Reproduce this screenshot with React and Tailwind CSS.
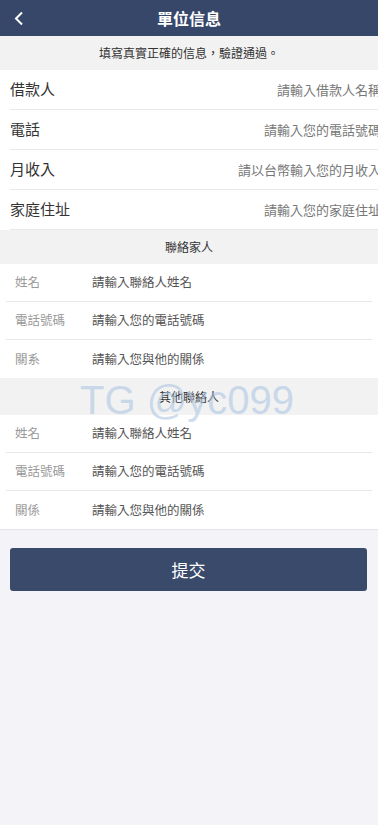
import React from "react";

const cjk = { fontFamily: '"Noto Sans CJK TC", "Noto Sans CJK SC", sans-serif' };

const mainRows = [
  ["借款人", "請輸入借款人名稱"],
  ["電話", "請輸入您的電話號碼"],
  ["月收入", "請以台幣輸入您的月收入"],
  ["家庭住址", "請輸入您的家庭住址"],
];

const contactRows = [
  ["姓名", "請輸入聯絡人姓名"],
  ["電話號碼", "請輸入您的電話號碼"],
  ["關系", "請輸入您與他的關係"],
];

const otherRows = [
  ["姓名", "請輸入聯絡人姓名"],
  ["電話號碼", "請輸入您的電話號碼"],
  ["關係", "請輸入您與他的關係"],
];

function SectionTitle({ children, h }) {
  return (
    <div className={`flex items-center justify-center bg-[#f2f2f2] text-[12px] text-[#333] ${h}`}>
      {children}
    </div>
  );
}

function ContactList({ rows }) {
  return (
    <div className="bg-white px-[6px] shadow-[0_1px_1px_rgba(0,0,0,0.06)]">
      {rows.map(([label, hint], i) => (
        <div
          key={i}
          className={`flex h-[38px] items-center text-[12.5px] ${i < rows.length - 1 ? "border-b border-[#e8e8e8]" : ""}`}
        >
          <span className="w-[86px] pl-[9px] text-[#999]">{label}</span>
          <span className="text-[#555]">{hint}</span>
        </div>
      ))}
    </div>
  );
}

export default function App() {
  return (
    <div className="relative min-h-[825px] bg-[#f4f4f8]" style={cjk}>
      {/* 頂部 */}
      <header className="relative flex h-[36px] items-center justify-center bg-[#37476a]">
        <svg className="absolute left-[14px] top-[11px]" width="10" height="15" viewBox="0 0 10 15">
          <polyline points="8,1.5 2,7.5 8,13.5" fill="none" stroke="white" strokeWidth="2" />
        </svg>
        <h1 className="text-[16px] font-bold text-white">單位信息</h1>
      </header>

      <div className="flex h-[34px] items-center justify-center bg-[#f2f2f2] text-[12px] text-[#333]">
        填寫真實正確的信息，驗證通過。
      </div>

      <div className="bg-white pl-[10px]">
        {mainRows.map(([label, hint], i) => (
          <div key={i} className="flex h-[40px] items-center justify-between overflow-hidden border-b border-[#e8e8e8]">
            <span className="text-[15px] text-[#333]">{label}</span>
            <span className="-mr-[3px] whitespace-nowrap text-[13px] text-[#777]">{hint}</span>
          </div>
        ))}
      </div>

      <SectionTitle h="h-[34px]">聯絡家人</SectionTitle>
      <ContactList rows={contactRows} />

      <SectionTitle h="h-[37px]">其他聯絡人</SectionTitle>
      <ContactList rows={otherRows} />

      <div className="px-[10px] pt-[19px]">
        <button className="flex h-[43px] w-[357px] items-center justify-center rounded-[3px] bg-[#3a4a6b] text-[17px] text-white">
          提交
        </button>
      </div>

      {/* 浮水印 */}
      <div
        className="pointer-events-none absolute left-[80px] top-[380px] text-[40px] leading-none text-[#aec8e4] opacity-60"
        style={{ fontFamily: '"Liberation Sans", sans-serif' }}
      >
        TG @yc099
      </div>
    </div>
  );
}
